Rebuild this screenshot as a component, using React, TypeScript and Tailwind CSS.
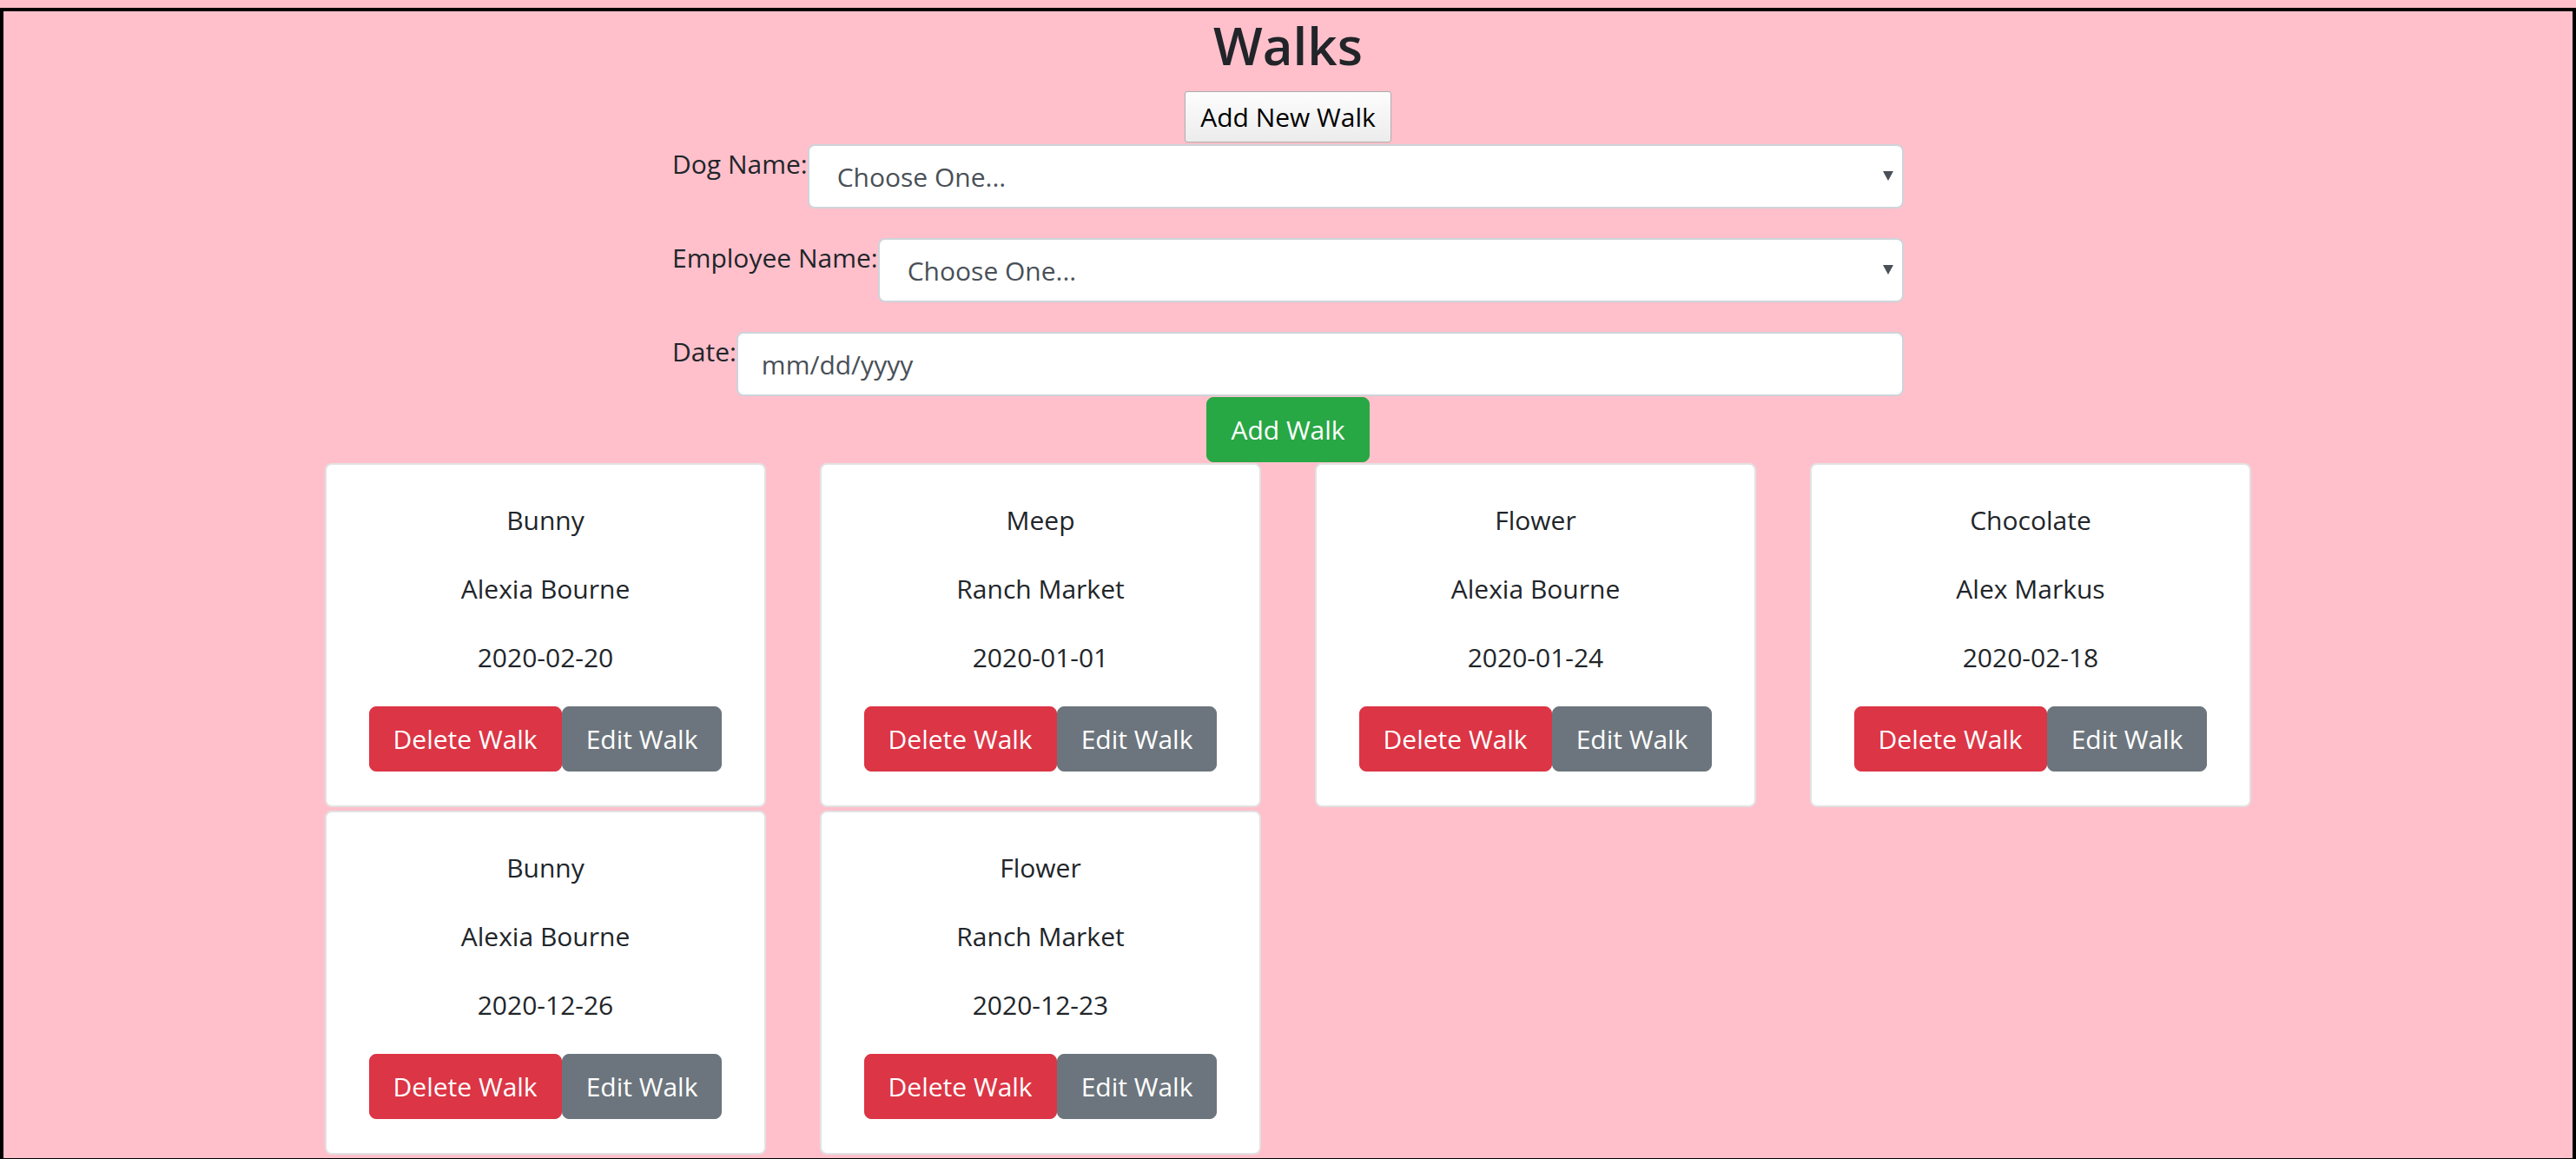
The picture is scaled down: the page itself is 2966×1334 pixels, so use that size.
import React from 'react';

const walks = [
  { dog: 'Bunny', employee: 'Alexia Bourne', date: '2020-02-20' },
  { dog: 'Meep', employee: 'Ranch Market', date: '2020-01-01' },
  { dog: 'Flower', employee: 'Alexia Bourne', date: '2020-01-24' },
  { dog: 'Chocolate', employee: 'Alex Markus', date: '2020-02-18' },
  { dog: 'Bunny', employee: 'Alexia Bourne', date: '2020-12-26' },
  { dog: 'Flower', employee: 'Ranch Market', date: '2020-12-23' },
];

const SelectField = ({ label }: { label: string }) => (
  <div className="flex items-start mb-[34px]">
    <label className="leading-[45px] whitespace-nowrap">{label}</label>
    <div className="relative flex-1">
      <select className="w-full h-[74px] appearance-none bg-white border-2 border-[#ced4da] rounded-[8px] pl-[32px] pr-[40px] text-[#495057] outline-none">
        <option>Choose One...</option>
      </select>
      {/* arrow */}
      <svg className="absolute right-[12px] top-[31px] pointer-events-none" width="12" height="11" viewBox="0 0 12 11">
        <polygon points="0,0 12,0 6,11" fill="#495057" />
      </svg>
    </div>
  </div>
);

const WalkCard = ({ dog, employee, date }: { dog: string; employee: string; date: string }) => (
  <div className="w-[508px] bg-white border-2 border-[#e2e2e2] rounded-[8px] pt-[41px] pb-[39px] text-center">
    <p className="mb-[34px]">{dog}</p>
    <p className="mb-[34px]">{employee}</p>
    <p className="mb-[34px]">{date}</p>
    <div className="inline-flex">
      <button className="bg-[#dc3545] border border-[#dc3545] text-white rounded-[8px] px-[27px] py-[14px]">Delete Walk</button>
      <button className="bg-[#6c757d] border border-[#6c757d] text-white rounded-[8px] px-[27px] py-[14px]">Edit Walk</button>
    </div>
  </div>
);

export default function App() {
  return (
    <div className="h-[1334px] overflow-hidden bg-[#ffc0cb] pt-[9px] font-['Open_Sans',sans-serif] text-[30px] leading-[45px] text-[#212529]">
      <div className="h-[1328px] border-4 border-black pt-[3px]">
        {/* Header */}
        <h2 className="text-center text-[60px] leading-[72px] font-semibold">Walks</h2>
        <div className="flex justify-center mt-[17px]">
          <button className="h-[59px] px-[17px] border border-[#adadad] rounded-[3px] bg-linear-to-b from-[#fdfdfd] to-[#ececec] text-black">
            Add New Walk
          </button>
        </div>

        {/* Add walk form */}
        <form className="w-[1418px] mx-auto mt-[2px]">
          <SelectField label="Dog Name:" />
          <SelectField label="Employee Name:" />
          <div className="flex items-start">
            <label className="leading-[45px] whitespace-nowrap">Date:</label>
            <input
              type="text"
              placeholder="mm/dd/yyyy"
              className="flex-1 h-[74px] bg-white border-2 border-[#ced4da] rounded-[8px] pl-[27px] text-[#495057] placeholder:text-[#495057] outline-none"
            />
          </div>
          <div className="flex justify-center mt-px">
            <button type="button" className="bg-[#28a745] border border-[#28a745] text-white rounded-[8px] px-[27px] py-[14px]">
              Add Walk
            </button>
          </div>
        </form>

        {/* Walk cards */}
        <div className="w-[2218px] mx-auto mt-px flex flex-wrap gap-x-[62px] gap-y-[4px]">
          {walks.map((w, i) => (
            <WalkCard key={i} dog={w.dog} employee={w.employee} date={w.date} />
          ))}
        </div>
      </div>
    </div>
  );
}
